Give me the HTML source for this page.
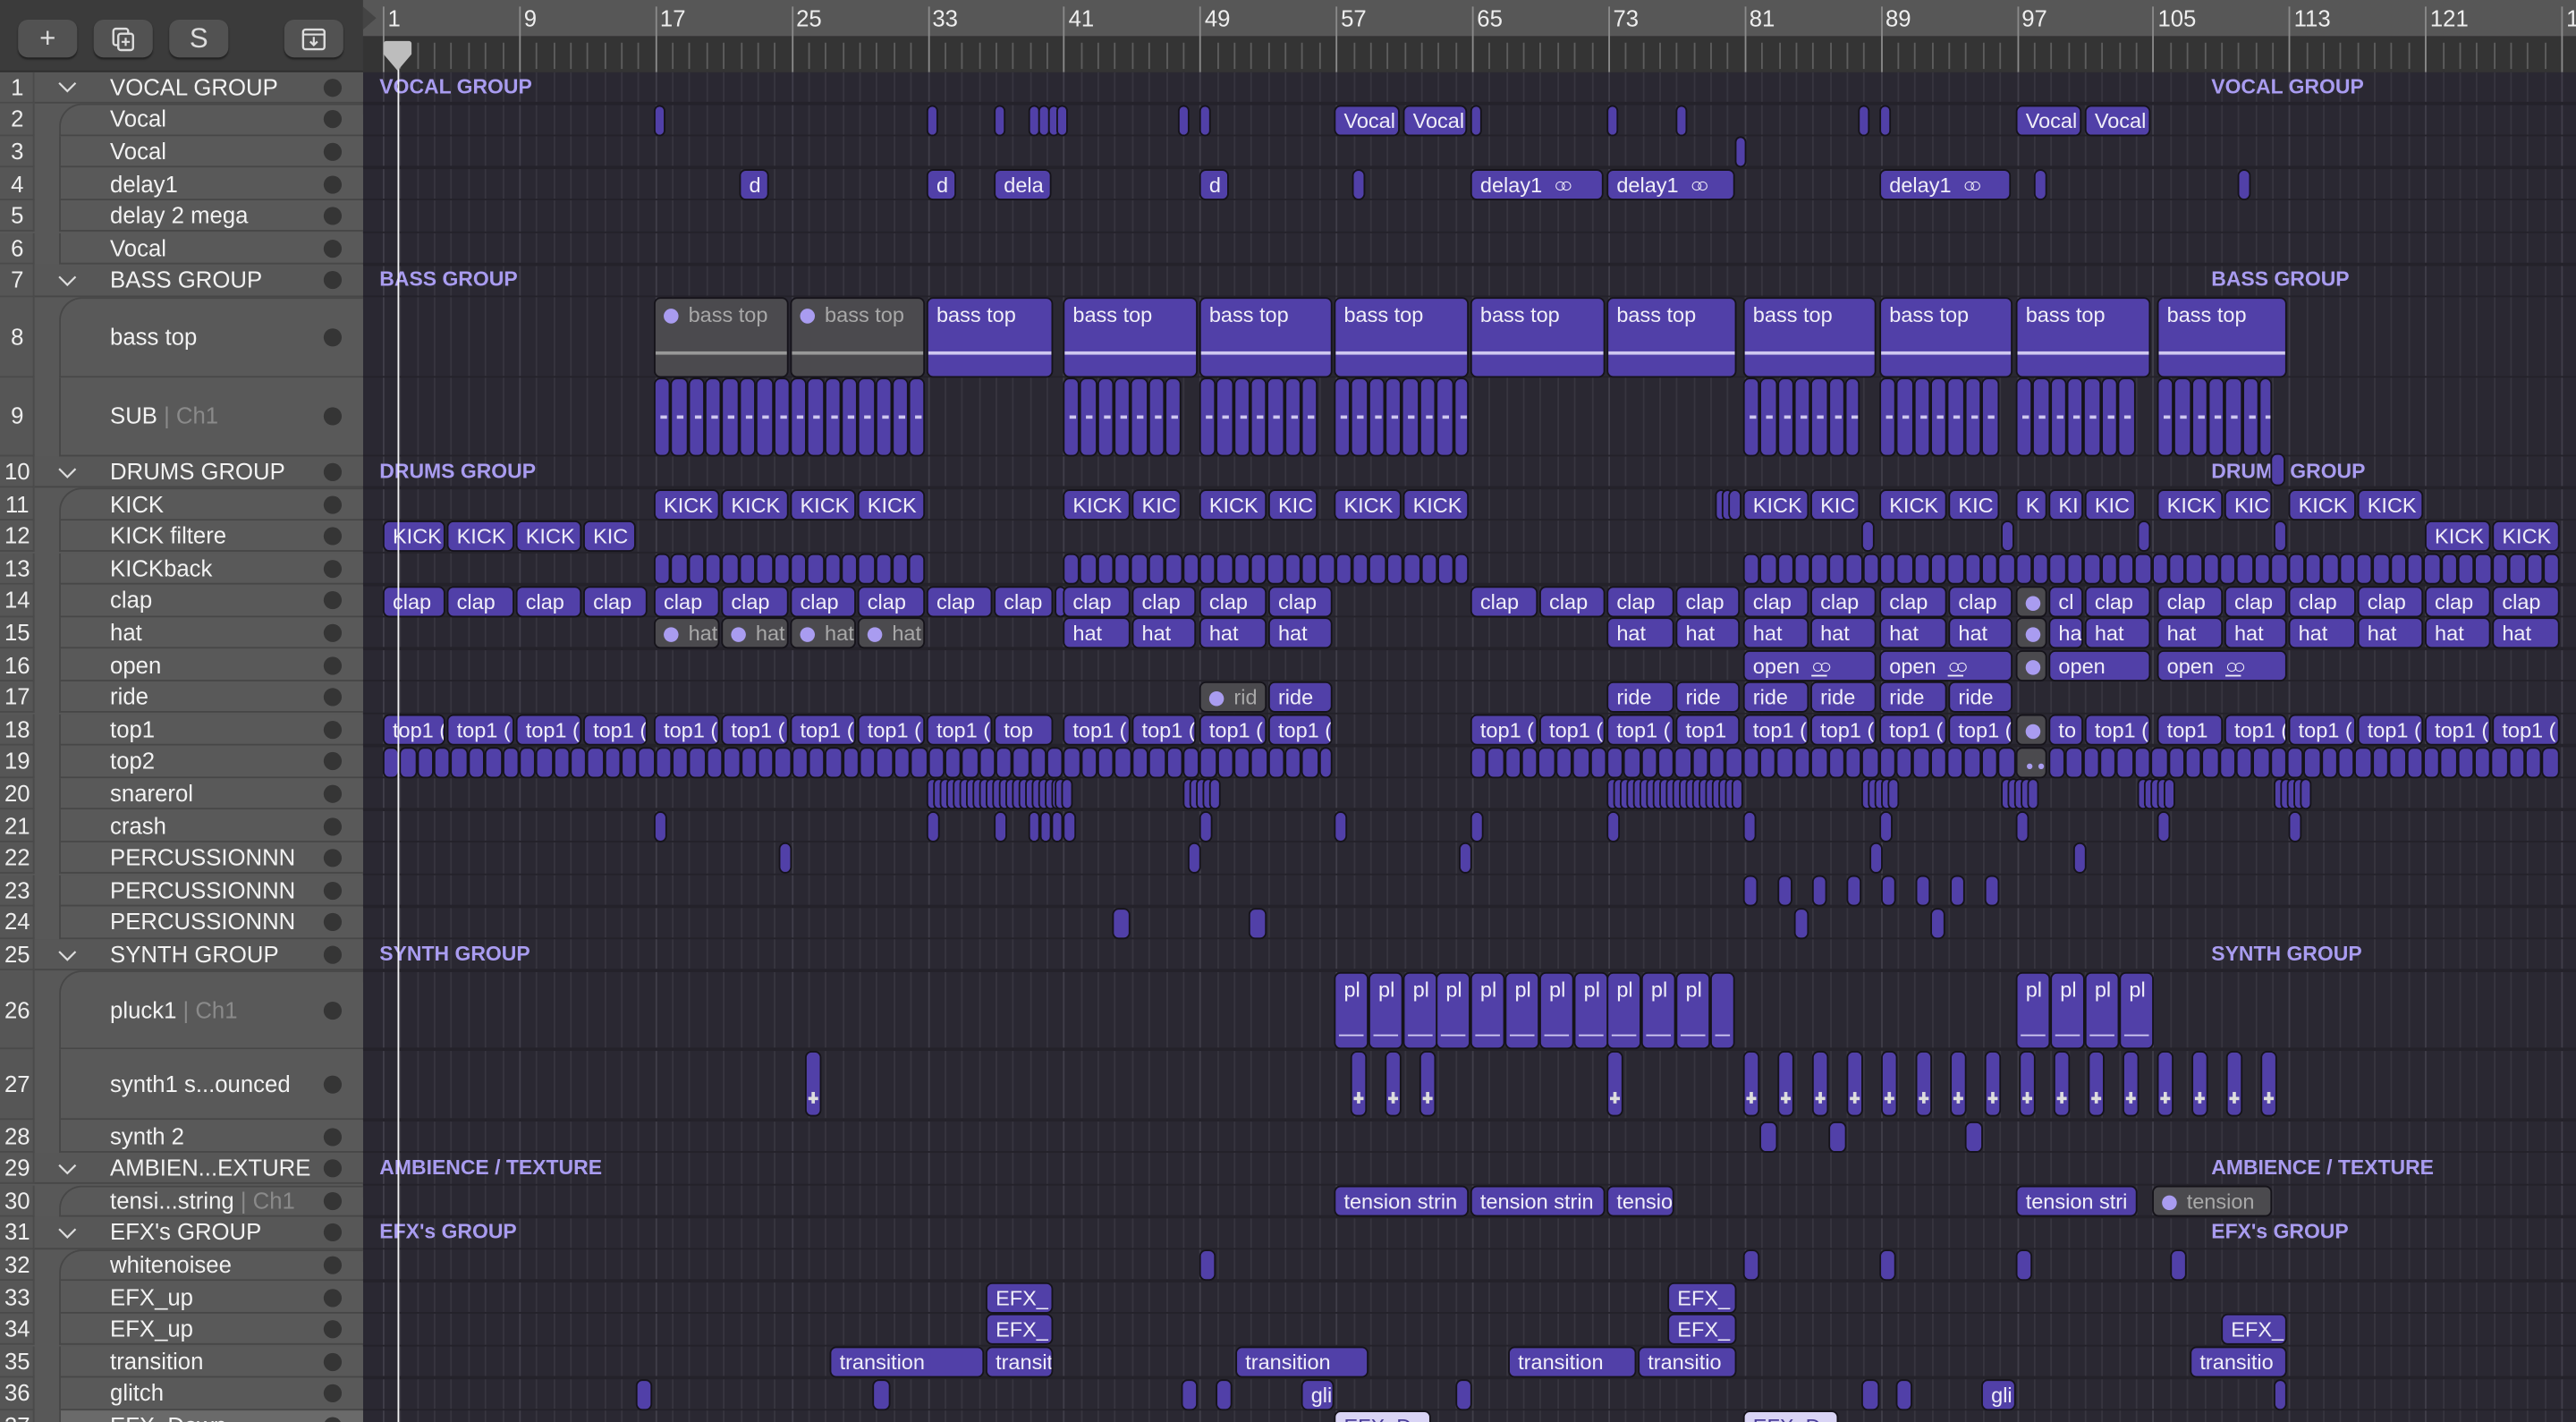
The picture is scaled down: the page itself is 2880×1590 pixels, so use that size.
<!DOCTYPE html>
<html><head><meta charset="utf-8">
<style>
html,body{margin:0;padding:0;width:2880px;height:1590px;overflow:hidden;background:#2a2832;}
#w{position:absolute;left:0;top:0;width:1568px;height:866px;transform:scale(1.83674,1.83603);transform-origin:0 0;overflow:hidden;font-family:"Liberation Sans",sans-serif;}
.abs{position:absolute;}
#left{left:0;top:0;width:221px;height:866px;background:#585858;}
#tb{left:0;top:0;width:221px;height:43px;background:#3b3b3b;border-bottom:1px solid #2e2e2e;}
.btn{position:absolute;top:12px;width:36px;height:23px;background:#525252;border-radius:6px;box-shadow:0 1px 1px #222;color:#ddd;text-align:center;font-size:17px;line-height:23px;}
.num{position:absolute;left:0;width:21px;text-align:center;color:#eee;font-size:14px;}
.row{position:absolute;left:36px;width:185px;background:#595959;border-bottom:1.5px solid #474747;box-sizing:border-box;}
.grow{position:absolute;left:21px;width:200px;background:#575757;border-bottom:1.5px solid #474747;box-sizing:border-box;}
.nm{position:absolute;left:67px;color:#f2f2f2;font-size:14px;white-space:nowrap;}
.dot{position:absolute;left:197px;width:11px;height:11px;border-radius:50%;background:#353535;}
.chev{position:absolute;left:35px;}
.vl{position:absolute;top:44px;width:1px;height:822px;background:#3b3944;}
.hl{position:absolute;left:221px;width:1347px;height:1.5px;background:#24222a;}
.c{position:absolute;background:#5140a8;border:1px solid #15131a;border-radius:4px;box-sizing:border-box;color:#f0eef8;font-size:12.8px;overflow:hidden;white-space:nowrap;padding-left:5px;}
.g{background:#4b4a4e;color:#a8a8a8;}
.lt{background:#d9d4f5;}
.gl{position:absolute;color:#a99cf0;font-weight:bold;font-size:12.5px;white-space:nowrap;}
.pd{display:inline-block;width:9px;height:9px;border-radius:50%;background:#a99cf0;margin-right:6px;vertical-align:-1px;}
</style></head><body><div id="w">
<div id="left" class="abs"></div>
<div id="tb" class="abs">
<div class="btn" style="left:11px">+</div>
<div class="btn" style="left:57px"><svg width="16" height="16" viewBox="0 0 16 16" style="margin-top:4px"><rect x="2" y="1.5" width="9" height="10" rx="1.5" fill="none" stroke="#ddd" stroke-width="1.3"/><rect x="5" y="4.5" width="9" height="10" rx="1.5" fill="#525252" stroke="#ddd" stroke-width="1.3"/><path d="M9.5 7v5M7 9.5h5" stroke="#ddd" stroke-width="1.2"/></svg></div>
<div class="btn" style="left:103px">S</div>
<div class="btn" style="left:173px"><svg width="16" height="16" viewBox="0 0 16 16" style="margin-top:4px"><rect x="1.5" y="2" width="13" height="12" rx="1.5" fill="none" stroke="#ddd" stroke-width="1.3"/><path d="M1.5 5h13M8 6.5v5M5.8 9.3L8 11.5l2.2-2.2" fill="none" stroke="#ddd" stroke-width="1.2"/></svg></div>
</div>
</div>
<script>
var S=function(h){document.getElementById('w').insertAdjacentHTML('beforeend',h)};
var H=[];for(var i=1;i<=37;i++){H.push(i==8?49:i==9?48:i==26?48:i==27?43:19.6)}
var T=[];var y=43.5;for(i=0;i<37;i++){T.push(y);y+=H[i]}
var names=["VOCAL GROUP","Vocal","Vocal","delay1","delay 2 mega","Vocal","BASS GROUP","bass top","SUB|Ch1","DRUMS GROUP","KICK","KICK filtere","KICKback","clap","hat","open","ride","top1","top2","snarerol","crash","PERCUSSIONNN","PERCUSSIONNN","PERCUSSIONNN","SYNTH GROUP","pluck1|Ch1","synth1 s...ounced","synth 2","AMBIEN...EXTURE","tensi...string|Ch1","EFX's GROUP","whitenoisee","EFX_up","EFX_up","transition","glitch","EFX_Down"];
var groups=[1,7,10,25,29,31];
var h='';
h+='<div class="abs" style="left:221px;top:0;width:1347px;height:22px;background:#575757"></div>';
h+='<div class="abs" style="left:221px;top:22px;width:1347px;height:22px;background:#343434"></div>';
h+='<div class="abs" style="left:221px;top:4px;width:0;height:0;border-top:7px solid transparent;border-bottom:7px solid transparent;border-left:8px solid #444"></div>';
for(var b=1;b<=130;b++){var x=233+(b-1)*10.36;if(x>1568)break;
 if((b-1)%8==0){h+='<div class="abs" style="left:'+x+'px;top:4px;width:1px;height:40px;background:#8a8a8a"></div><div class="abs" style="left:'+(x+3)+'px;top:3px;color:#eee;font-size:14px">'+b+'</div>';}
 else h+='<div class="abs" style="left:'+x+'px;top:26px;width:1px;height:16px;background:#5e5e5e"></div>';
 h+='<div class="vl" style="left:'+x+'px;background:'+((b-1)%8==0?'#403e49':'#37353f')+'"></div>';
}
for(i=0;i<37;i++){var n=i+1,t=T[i],hh=H[i],isG=groups.indexOf(n)>=0;
 var nm=names[i].split('|');var lbl=nm[0]+(nm[1]?' <span style="color:#8a8a8a">| '+nm[1]+'</span>':'');
 var first=groups.indexOf(n-1)>=0;
 h+='<div class="abs" style="left:0;top:'+t+'px;width:21px;height:'+hh+'px;background:#565656;border-right:1.5px solid #4a4a4a;border-bottom:1.5px solid #4a4a4a;box-sizing:border-box"></div>';
 if(isG){h+='<div class="grow" style="top:'+t+'px;height:'+hh+'px"></div><svg class="chev" style="top:'+(t+hh/2-4)+'px" width="12" height="8" viewBox="0 0 12 8"><path d="M1 1.5l5 5 5-5" fill="none" stroke="#ddd" stroke-width="1.2"/></svg>';}
 else h+='<div class="row" style="top:'+t+'px;height:'+hh+'px;'+(first?'border-top-left-radius:14px;border-top:1.5px solid #474747;':'')+'border-left:1.5px solid #474747;'+(n==37?'background:#6a6a6a;':'')+'"></div>';
 h+='<div class="num" style="top:'+(t+hh/2-8.5)+'px">'+n+'</div>';
 h+='<div class="nm" style="top:'+(t+hh/2-8.5)+'px">'+lbl+'</div>';
 h+='<div class="dot" style="top:'+(t+hh/2-5.5)+'px"></div>';
 h+='<div class="hl" style="top:'+(t+hh-1)+'px"></div>';
}
var gl={1:["VOCAL GROUP","VOCAL GROUP"],7:["BASS GROUP","BASS GROUP"],10:["DRUMS GROUP","DRUM&nbsp;&nbsp;&nbsp;GROUP"],25:["SYNTH GROUP","SYNTH GROUP"],29:["AMBIENCE / TEXTURE","AMBIENCE / TEXTURE"],31:["EFX's GROUP","EFX's GROUP"]};
for(var k in gl){var t=T[k-1];h+='<div class="gl" style="left:231px;top:'+(t+2)+'px">'+gl[k][0]+'</div><div class="gl" style="left:1346px;top:'+(t+2)+'px">'+gl[k][1]+'</div>';}
function C(r,x1,x2,l,cls,extra){var t=T[r-1],hh=H[r-1];var st='left:'+x1+'px;top:'+(t+0.5)+'px;width:'+(x2-x1)+'px;height:'+(hh-0.5)+'px;';
 var lh=(hh>30)?'line-height:20px;':'line-height:'+(hh-2)+'px;';
 return '<div class="c '+(cls||'')+'" style="'+st+lh+'">'+(l||'')+(extra||'')+'</div>';}
function segs(r,a,bb,w,extra){var s='';for(var x=a;x<bb-2;x+=w){s+=C(r,x,Math.min(x+w,bb),'','',extra)}return s;}
function L(r,arr,cls){var s='';arr.forEach(function(a){s+=C(r,a[0],a[1],a[2]||'',a[3]||cls,a[4])});return s;}
var dotg='<span class="pd"></span>';
h+=L(2,[[398,405],[564,571],[605,612],[626,631],[632,637],[638,643],[643,648],[717,724],[730,737],[812,852,'Vocal'],[854,893,'Vocal'],[895,902],[978,985],[1020,1027],[1131,1138],[1144,1151],[1227,1267,'Vocal'],[1269,1309,'Vocal']]);
h+=L(3,[[1056,1063]]);
var oo=' &nbsp;<span style="letter-spacing:-4px">&#9675;&#9675;</span>';
h+=L(4,[[450,468,'d'],[564,582,'d'],[605,640,'dela'],[730,748,'d'],[823,831],[895,976,'delay1'+oo],[978,1056,'delay1'+oo],[1144,1224,'delay1'+oo],[1238,1246],[1362,1370]]);
var wave='<div style="position:absolute;left:0;right:0;top:32px;height:1.5px;background:#cfc8f0"></div>';
var gw='<div style="position:absolute;left:0;right:0;top:32px;height:1.5px;background:#999"></div>';
h+=L(8,[[398,480,dotg+'bass top','g',gw],[481,563,dotg+'bass top','g',gw]]);
[[564,641],[647,729],[730,811],[812,894],[895,977],[978,1057],[1061,1142],[1144,1225],[1227,1309],[1313,1392]].forEach(function(a){h+=C(8,a[0],a[1],'bass top','',wave)});
var dash='<div style="position:absolute;left:3px;width:4px;top:22px;height:1.5px;background:#cfc8f0"></div>';
[[398,563],[647,719],[730,802],[812,894],[1061,1132],[1144,1217],[1227,1300],[1313,1383]].forEach(function(a){h+=segs(9,a[0],a[1],10.36,dash)});
h+='<div class="c" style="left:1382px;top:'+(T[9]-2)+'px;width:9px;height:20px"></div>';
h+=L(11,[[398,438,'KICK'],[439,480,'KICK'],[481,521,'KICK'],[522,563,'KICK'],[647,688,'KICK'],[689,719,'KIC'],[730,771,'KICK'],[772,802,'KIC'],[812,853,'KICK'],[854,894,'KICK'],[1044,1048],[1048,1052],[1052,1060],[1061,1101,'KICK'],[1102,1132,'KIC'],[1144,1185,'KICK'],[1186,1217,'KIC'],[1227,1246,'K'],[1247,1268,'KI'],[1269,1300,'KIC'],[1313,1353,'KICK'],[1354,1383,'KIC'],[1393,1434,'KICK'],[1435,1475,'KICK']]);
h+=L(12,[[233,271,'KICK'],[272,313,'KICK'],[314,354,'KICK'],[355,387,'KIC'],[1133,1141],[1218,1226],[1301,1309],[1384,1392],[1476,1516,'KICK'],[1517,1558,'KICK']]);
[[398,563],[647,894],[1061,1558]].forEach(function(a){h+=segs(13,a[0],a[1],10.36)});
function quad(r,word,ranges){var s='';ranges.forEach(function(a){s+=C(r,a[0],a[1],a[2]||word,a[3],a[4])});return s;}
var gd=[1227,1246,dotg,'g'];
h+=quad(14,'clap',[[233,271],[272,313],[314,354],[355,394],[398,438],[439,480],[481,521],[522,563],[564,604],[605,641],[642,647,' '],[647,688],[689,728],[730,771],[772,811],[895,936],[937,977],[978,1019],[1020,1059],[1061,1101],[1102,1142],[1144,1185],[1186,1225],gd,[1247,1268,'cl'],[1269,1309],[1313,1353],[1354,1392],[1393,1434],[1435,1475],[1476,1516],[1517,1558]]);
h+=quad(15,'hat',[[398,438,dotg+'hat','g'],[439,480,dotg+'hat','g'],[481,521,dotg+'hat','g'],[522,563,dotg+'hat','g'],[647,688],[689,728],[730,771],[772,811],[978,1019],[1020,1059],[1061,1101],[1102,1142],[1144,1185],[1186,1225],gd,[1247,1268,'ha'],[1269,1309],[1313,1353],[1354,1392],[1393,1434],[1435,1475],[1476,1516],[1517,1558]]);
var oou=' &nbsp;<span style="text-decoration:underline;letter-spacing:-3px">&#9675;&#9675;</span>';
h+=quad(16,'open',[[1061,1142,'open'+oou],[1144,1225,'open'+oou],gd,[1247,1309],[1313,1392,'open'+oou]]);
h+=quad(17,'ride',[[730,771,dotg+'rid','g'],[772,811],[978,1019],[1020,1059],[1061,1101],[1102,1142],[1144,1185],[1186,1225]]);
h+=quad(18,'top1 (',[[233,271],[272,313],[314,354],[355,394],[398,438],[439,480],[481,521],[522,563],[564,604],[605,641,'top'],[647,688],[689,728],[730,771],[772,811],[895,936],[937,977],[978,1019],[1020,1059,'top1'],[1061,1101],[1102,1142],[1144,1185],[1186,1225],gd,[1247,1268,'to'],[1269,1309],[1313,1353,'top1'],[1354,1392],[1393,1434],[1435,1475],[1476,1516],[1517,1558]]);
[[233,811],[895,1227],[1247,1558]].forEach(function(a){h+=segs(19,a[0],a[1],10.36)});
h+=C(19,1227,1246,'<span style="font-size:8px;color:#a99cf0">&#9679; &#9679;</span>','g');
[[564,641,4],[642,650,4],[720,738,4],[978,1057,4],[1133,1152,4],[1218,1236,4],[1301,1319,4],[1384,1401,4]].forEach(function(a){for(var x=a[0];x<a[1];x+=a[2])h+=C(20,x,Math.min(x+a[2],a[1]),'')});
h+=L(21,[[398,406],[564,572],[605,613],[626,633],[633,640],[640,647],[647,655],[730,738],[812,820],[895,903],[978,986],[1061,1069],[1144,1152],[1227,1235],[1313,1321],[1393,1401]]);
h+=L(22,[[474,482],[723,731],[888,896],[1138,1146],[1262,1270]]);
h+=L(23,[[1061,1070],[1082,1091],[1103,1112],[1124,1133],[1145,1154],[1166,1175],[1187,1196],[1208,1217]]);
h+=L(24,[[677,688],[760,771],[1092,1101],[1175,1184]]);
var pl='<div style="position:absolute;left:2px;right:2px;top:37px;height:1.5px;background:#cfc8f0"></div>';
[812,833,854,874,895,916,937,958,978,999,1020,1041,1227,1248,1269,1290].forEach(function(x,i){h+=C(26,x,x+(x==1041?15:20.5),x==1041?'':'pl','',pl)});
var plus='<div style="position:absolute;left:50%;margin-left:-3px;top:27px;width:6px;height:1.5px;background:#ddd"></div><div style="position:absolute;left:50%;margin-left:-1px;top:24px;width:1.5px;height:7px;background:#ddd"></div>';
[490,822,843,864,978,1061,1082,1103,1124,1145,1166,1187,1208,1229,1250,1271,1292,1313,1334,1355,1376].forEach(function(x){h+='<div class="c" style="left:'+x+'px;top:'+(T[26]+1)+'px;width:10px;height:40px;padding:0">'+plus+'</div>'});
h+=L(28,[[1071,1082],[1113,1124],[1196,1207]]);
h+=L(30,[[812,894,'tension strin'],[895,977,'tension strin'],[978,1019,'tensio'],[1227,1301,'tension stri'],[1310,1383,dotg+'tension','g']]);
h+=L(32,[[730,740],[1061,1071],[1144,1154],[1227,1237],[1321,1331]]);
h+=L(33,[[600,641,'EFX_'],[1015,1057,'EFX_']]);
h+=L(34,[[600,641,'EFX_'],[1015,1057,'EFX_'],[1352,1392,'EFX_']]);
h+=L(35,[[505,599,'transition'],[600,641,'transitio'],[752,833,'transition'],[918,996,'transition'],[997,1057,'transitio'],[1333,1392,'transitio']]);
h+=L(36,[[387,397],[531,542],[719,729],[740,750],[792,812,'gli'],[886,896],[1133,1144],[1154,1164],[1206,1227,'gli'],[1384,1392]]);
h+=L(37,[[812,871,'<span style="color:#4a3d99">EFX_D</span>','lt'],[1061,1119,'<span style="color:#4a3d99">EFX_D</span>','lt']]);
h+='<div class="abs" style="left:241.5px;top:26px;width:1.5px;height:840px;background:#f4f4f4"></div>';
h+='<svg class="abs" style="left:233px;top:24px" width="18" height="20"><path d="M2 1h14a1.5 1.5 0 0 1 1.5 1.5V9L9 19 0.5 9V2.5A1.5 1.5 0 0 1 2 1z" fill="#bdbdbd"/></svg>';
S(h);
</script>
</body></html>
